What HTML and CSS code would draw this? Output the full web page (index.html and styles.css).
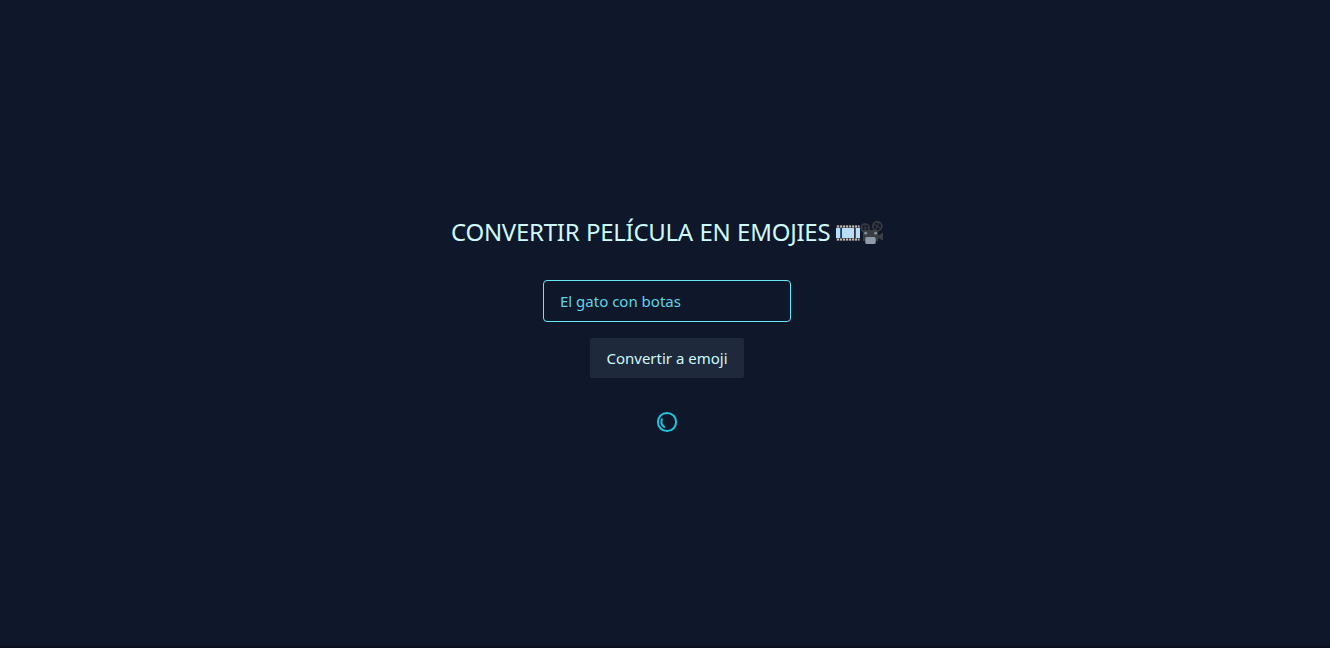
FILE: index.html
```html
<!DOCTYPE html>
<html lang="es">
<head>
<meta charset="utf-8">
<title>Convertir película en emojies</title>
<link rel="stylesheet" href="styles.css">
</head>
<body>
<main class="page">
  <h1 class="title"><span class="title-text">CONVERTIR PELÍCULA EN EMOJIES</span>
    <svg class="emoji" viewBox="0 0 24 24" aria-hidden="true">
      <path d="M0 4h24v16H0z" fill="#35343a"/>
      <path d="M1.3 5.5h22M1.3 18.5h22" stroke="#eee8df" stroke-width="2" stroke-dasharray="1.5 1.5"/>
      <path d="M0 7h4v10H0zM6 7h12v10H6zM20 7h4v10h-4z" fill="#b9dcf8"/>
      <path d="M4.5 7v10M19.5 7v10" stroke="#315a8c"/>
    </svg><svg class="emoji" viewBox="0 0 24 24" aria-hidden="true">
      <g fill="none" stroke="#383b40" stroke-width="1.7">
        <circle cx="5.2" cy="7" r="4"/><circle cx="17.3" cy="5.3" r="4.5"/>
        <path d="M5.2 3v8M1.5 7h7.4M14 3.5l7 4M19 1.5l-3.5 7.5" stroke-width="1.1"/>
      </g>
      <path d="M3 9h15v5.5L23 11.5v8L18 17v3H3z" fill="#3a3e42"/>
      <circle cx="5.7" cy="12.2" r="1.4" fill="#84929d"/><circle cx="15.7" cy="12.2" r="1.4" fill="#84929d"/>
      <rect x="5.3" y="16" width="10.4" height="7" rx="1.5" fill="#8d9ba8"/>
    </svg>
  </h1>
  <form class="form">
    <input class="field" type="text" placeholder="El gato con botas" aria-label="Película">
    <button class="submit" type="button"><span class="submit-text">Convertir a emoji</span></button>
  </form>
  <svg class="loader" viewBox="0 0 24 24" role="img" aria-label="Cargando">
    <circle cx="12" cy="12" r="9.1"/>
    <path d="M6.8 9.2c-1 2.8-.1 6 2.5 7.8"/>
  </svg>
</main>
</body>
</html>
```
FILE: styles.css
```css
* { box-sizing: border-box; }
body {
  margin: 0;
  background: #0f172a;
  color: #cffafe;
  font-family: "Noto Sans", sans-serif;
}
.page {
  height: 648px;
  padding: 216px 0 0 4px;
  border-bottom: 2px solid #0a0f20;
  display: flex;
  flex-direction: column;
  align-items: center;
}
.title {
  margin: 0;
  height: 32px;
  padding-left: 1px;
  display: flex;
  align-items: center;
  font-size: 24px;
  line-height: 32px;
  font-weight: 400;
  white-space: nowrap;
}
.title-text {
  width: 385px;
  letter-spacing: -0.27px;
  word-spacing: 0.6px;
}
.emoji {
  width: 24px;
  height: 24px;
  margin-top: 1px;
}
.form {
  margin-top: 32px;
  display: flex;
  flex-direction: column;
  align-items: center;
  gap: 16px;
}
.field {
  width: 248px;
  height: 42px;
  padding: 8px 16px;
  border: 1px solid #67e8f9;
  border-radius: 4px;
  outline: 0;
  background: transparent;
  color: #67e8f9;
  font: 15px/24px "Noto Sans", sans-serif;
}
.field::placeholder { color: #5fd4e6; opacity: 1; }
.submit {
  width: 154px;
  height: 40px;
  padding: 0;
  border: 0;
  border-radius: 2px;
  background: #1e293b;
  color: #cffafe;
  font: 15px/24px "Noto Sans", sans-serif;
  white-space: nowrap;
}
.loader {
  width: 24px;
  height: 24px;
  margin-top: 32px;
  fill: none;
  stroke: #22c3dc;
  stroke-width: 2;
  stroke-linecap: round;
}
```
